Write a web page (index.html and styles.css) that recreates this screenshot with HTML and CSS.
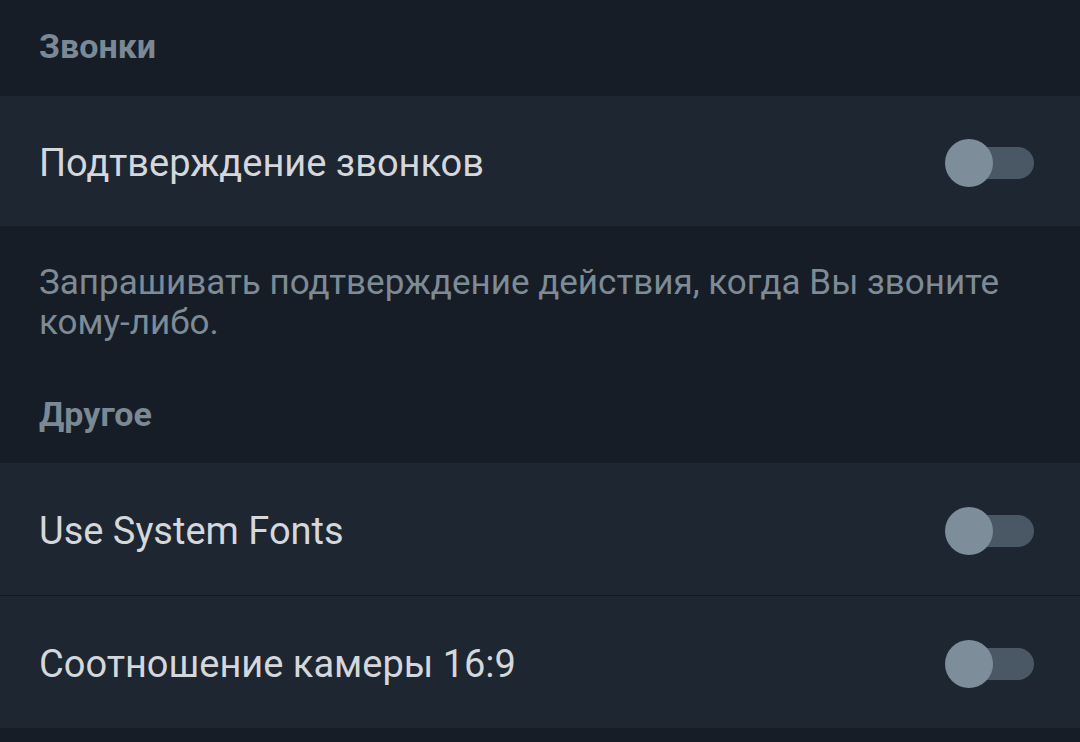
FILE: index.html
```html
<!DOCTYPE html>
<html lang="ru">
<head>
<meta charset="utf-8">
<link rel="stylesheet" href="styles.css">
</head>
<body>
<div class="screen">
  <div class="section-header">Звонки</div>
  <div class="row">
    <span class="row-text">Подтверждение звонков</span>
    <span class="switch"><span class="track"></span><span class="knob"></span></span>
  </div>
  <div class="info">Запрашивать подтверждение действия, когда Вы звоните <span class="nowrap">кому-либо.</span></div>
  <div class="section-header second">Другое</div>
  <div class="row divided">
    <span class="row-text">Use System Fonts</span>
    <span class="switch"><span class="track"></span><span class="knob"></span></span>
  </div>
  <div class="row last">
    <span class="row-text">Соотношение камеры 16:9</span>
    <span class="switch"><span class="track"></span><span class="knob"></span></span>
  </div>
</div>
</body>
</html>
```
FILE: styles.css
```css
html, body {
  margin: 0;
  padding: 0;
  background: #171d26;
}
.screen {
  width: 1080px;
  height: 742px;
  overflow: hidden;
  background: #171d26;
  font-family: Roboto, "Noto Sans", sans-serif;
}
.section-header {
  height: 96px;
  box-sizing: border-box;
  padding: 22px 39px 0;
  font-size: 34px;
  font-weight: 700;
  color: #7a8995;
  line-height: 48px;
}
.section-header.second {
  height: 88px;
  padding-top: 15px;
}
.row {
  height: 130px;
  box-sizing: border-box;
  background: #1e2632;
  display: flex;
  align-items: center;
  justify-content: space-between;
  padding: 3px 46px 0 39px;
}
.row.divided {
  border-bottom: 1px solid #141a22;
  height: 133px;
}
.row.last {
  height: 132px;
}
.row-text {
  font-size: 38px;
  color: #d4d7db;
}
.info {
  padding: 37px 39px 0;
  height: 112px;
  font-size: 35px;
  line-height: 40px;
  color: #7d8b97;
}
.nowrap {
  white-space: nowrap;
}
.switch {
  position: relative;
  width: 89px;
  height: 48px;
  display: block;
}
.track {
  position: absolute;
  left: 12px;
  top: 8px;
  width: 77px;
  height: 32px;
  border-radius: 16px;
  background: #4a5765;
}
.knob {
  position: absolute;
  left: 0;
  top: 0;
  width: 48px;
  height: 48px;
  border-radius: 50%;
  background: #7d8e9a;
}
```
